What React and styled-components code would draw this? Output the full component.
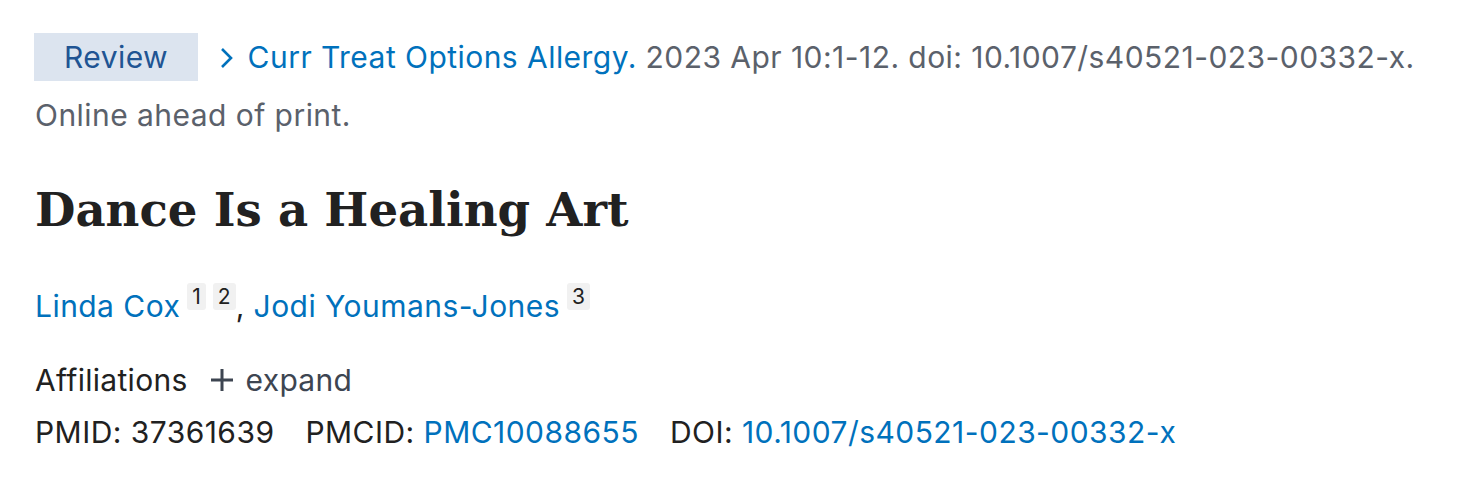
import React from "react";
import styled, { createGlobalStyle } from "styled-components";

const Global = createGlobalStyle`
  html, body { margin: 0; padding: 0; background: #ffffff; }
  body { font-family: Inter, "Noto Sans", "DejaVu Sans", sans-serif; }
`;

const Page = styled.main`
  padding: 28px 40px 0 35px;
  font-size: 30px;
  letter-spacing: 0.45px;
  color: #212121;
`;

const Citation = styled.p`
  margin: 0;
  line-height: 58px;
  color: #5b616b;
`;

const Badge = styled.span`
  display: inline-block;
  line-height: 48px;
  padding: 0 29.5px 0 30px;
  margin-left: -1px;
  background: #dce4ef;
  color: #205493;
`;

const Chevron = styled.svg`
  width: 16px;
  height: 22px;
  margin: 0 13px 0 21px;
  vertical-align: -1px;
`;

const Link = styled.a`
  color: #0071bc;
  text-decoration: none;
`;

const Title = styled.h1`
  margin: 38px 0 0;
  font-family: "DejaVu Serif", "Liberation Serif", serif;
  font-weight: 700;
  font-size: 46.6px;
  line-height: 1.2;
  letter-spacing: 0;
  color: #212121;
`;

const Authors = styled.div`
  margin-top: 48px;
  line-height: 40px;
  color: #212121;
`;

const Sup = styled.span`
  display: inline-block;
  position: relative;
  top: -13px;
  margin-left: 7px;
  padding: 0 5px;
  font-size: 21px;
  line-height: 27px;
  letter-spacing: 0;
  background: #f1f1f1;
  border-radius: 3px;
  color: #212121;
`;

const Affiliations = styled.div`
  margin-top: 34px;
  line-height: 40px;
  display: flex;
  align-items: center;
  letter-spacing: 0.3px;
`;

const Expand = styled.button`
  display: inline-flex;
  align-items: center;
  gap: 12px;
  margin-left: 22px;
  padding: 0;
  border: 0;
  background: none;
  font: inherit;
  letter-spacing: inherit;
  color: #3d4551;
  cursor: pointer;
`;

const Ids = styled.div`
  margin-top: 12px;
  line-height: 40px;
  display: flex;
  gap: 31px;
`;

const Id = styled.span`
  white-space: nowrap;
`;

export default function App() {
  return (
    <>
      <Global />
      <Page>
        <Citation>
          <Badge>Review</Badge>
          <Chevron viewBox="0 0 16 22" aria-hidden="true">
            <path d="M3 2 L12 11 L3 20" fill="none" stroke="#0071bc" strokeWidth="2.6" />
          </Chevron>
          <Link href="#">Curr Treat Options Allergy.</Link> 2023 Apr 10:1-12. doi:
          10.1007/s40521-023-00332-x. Online ahead of print.
        </Citation>
        <Title>Dance Is a Healing Art</Title>
        <Authors>
          <Link href="#">Linda Cox</Link>
          <Sup>1</Sup>
          <Sup>2</Sup>,{" "}
          <Link href="#">Jodi Youmans-Jones</Link>
          <Sup>3</Sup>
        </Authors>
        <Affiliations>
          Affiliations
          <Expand type="button">
            <svg width="24" height="24" viewBox="0 0 24 24" aria-hidden="true">
              <path d="M12 1 V23 M1 12 H23" stroke="#3d4551" strokeWidth="3" fill="none" />
            </svg>
            expand
          </Expand>
        </Affiliations>
        <Ids>
          <Id>PMID: 37361639</Id>
          <Id>
            PMCID: <Link href="#">PMC10088655</Link>
          </Id>
          <Id>
            DOI: <Link href="#">10.1007/s40521-023-00332-x</Link>
          </Id>
        </Ids>
      </Page>
    </>
  );
}
